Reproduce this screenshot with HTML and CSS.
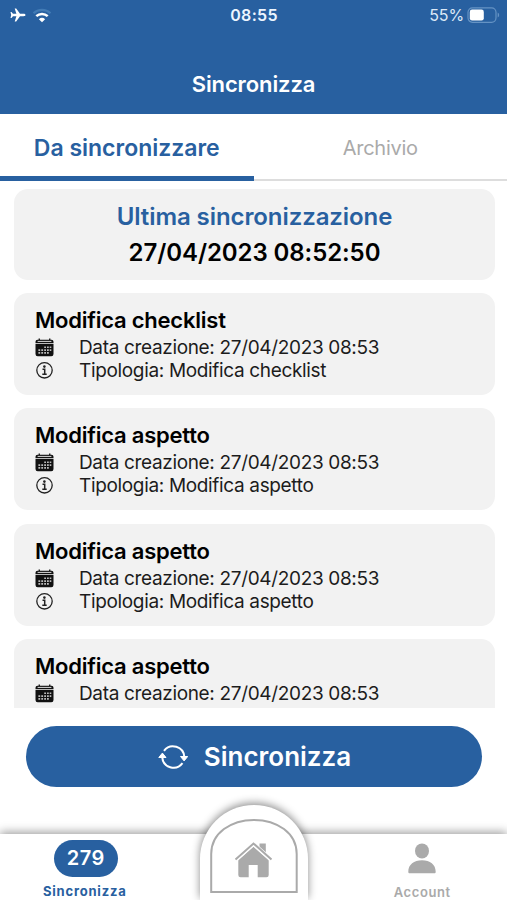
FILE: index.html
```html
<!DOCTYPE html>
<html lang="it">
<head>
<meta charset="utf-8">
<title>Sincronizza</title>
<link rel="stylesheet" href="styles.css">
</head>
<body>
<svg class="defs" aria-hidden="true">
  <symbol id="calendar" viewBox="0 0 19 19">
    <path fill="#111" d="M2.500 1.800H3.600V.6h1.300v1.200h9.200V.6h1.300v1.200h1.100A2 2 0 0 1 18.500 3.800v1.400H.5V3.800a2 2 0 0 1 2-2zM.5 6h18v10a2.200 2.200 0 0 1-2.200 2.200H2.700A2.200 2.200 0 0 1 .5 16z"/>
    <path stroke="#ddd" stroke-width="1" fill="none" d="M2.600 3.400h13.800"/>
    <path fill="#bbb" d="M9.200 8.500h1.800v1.600H9.200zM12 8.500h1.800v1.600H12zM14.700 8.500h1.600v1.600h-1.600zM3.400 11.300h1.800v1.600H3.400zM6.300 11.300h1.800v1.600H6.300zM9.200 11.300h1.800v1.600H9.200zM12 11.300h1.800v1.600H12zM14.700 11.300h1.600v1.600h-1.600zM3.400 14.100h1.800v1.600H3.400zM6.300 14.100h1.800v1.600H6.300zM9.200 14.100h1.800v1.600H9.200zM12 14.100h1.800v1.600H12z"/>
  </symbol>
  <symbol id="info" viewBox="0 0 19 19">
    <circle cx="9.500" cy="9.300" r="7.700" fill="none" stroke="#222" stroke-width="1.300"/>
    <circle cx="9.400" cy="5.600" r="1.300" fill="#222"/>
    <path d="M7.500 8.300h2.200v5M7.300 13.300h4.400" fill="none" stroke="#222" stroke-width="1.500"/>
  </symbol>
</svg>
<div class="screen">
  <header class="header">
    <div class="status">
      <div class="status-left">
        <svg width="16" height="14" viewBox="0 0 16 14"><path fill="#fff" d="M15.500 7c0-.8-.9-1.200-2-1.200H10L6.200.6H4.700l1.700 5.200H3L1.500 4H.5l.7 3-.7 3h1L3 8.200h3.400l-1.700 5.200h1.500L10 8.200h3.500c1.100 0 2-.4 2-1.200z"/></svg>
        <svg width="20" height="15" viewBox="0 0 20 15"><path d="M1.500 5.200a12.500 12.500 0 0 1 17 0" fill="none" stroke="#427bb5" stroke-width="2.200"/><path d="M4.300 8.200a8.300 8.300 0 0 1 11.400 0" fill="none" stroke="#fff" stroke-width="2.500"/><path d="M6.900 11.200a4.500 4.500 0 0 1 6.200 0L10 14.300z" fill="#fff"/></svg>
      </div>
      <div class="clock">08:55</div>
      <div class="status-right"><span class="percent">55%</span>
        <svg width="33" height="17" viewBox="0 0 33 17"><rect x="1" y=".8" width="28" height="14.500" rx="4.500" fill="none" stroke="#6593c4" stroke-width="1.200"/><rect x="2.800" y="2.600" width="14" height="11" rx="2.300" fill="#fff"/><path d="M30.700 5.500v5q1.500-.7 1.500-2.500t-1.500-2.500z" fill="#6593c4"/></svg>
      </div>
    </div>
    <h1 class="title">Sincronizza</h1>
  </header>
  <nav class="tabs">
    <div class="tab tab-active">Da sincronizzare</div>
    <div class="tab">Archivio</div>
  </nav>
  <main class="list">
    <section class="card summary">
      <div class="summary-label">Ultima sincronizzazione</div>
      <div class="summary-date">27/04/2023 08:52:50</div>
    </section>
    <article class="card item">
      <h2 class="item-title">Modifica checklist</h2>
      <div class="row"><svg class="icon"><use href="#calendar"/></svg><span>Data creazione: 27/04/2023 08:53</span></div>
      <div class="row"><svg class="icon"><use href="#info"/></svg><span>Tipologia: Modifica checklist</span></div>
    </article>
    <article class="card item">
      <h2 class="item-title">Modifica aspetto</h2>
      <div class="row"><svg class="icon"><use href="#calendar"/></svg><span>Data creazione: 27/04/2023 08:53</span></div>
      <div class="row"><svg class="icon"><use href="#info"/></svg><span>Tipologia: Modifica aspetto</span></div>
    </article>
    <article class="card item">
      <h2 class="item-title">Modifica aspetto</h2>
      <div class="row"><svg class="icon"><use href="#calendar"/></svg><span>Data creazione: 27/04/2023 08:53</span></div>
      <div class="row"><svg class="icon"><use href="#info"/></svg><span>Tipologia: Modifica aspetto</span></div>
    </article>
    <article class="card item">
      <h2 class="item-title">Modifica aspetto</h2>
      <div class="row"><svg class="icon"><use href="#calendar"/></svg><span>Data creazione: 27/04/2023 08:53</span></div>
      <div class="row"><svg class="icon"><use href="#info"/></svg></div>
    </article>
  </main>
  <div class="action">
    <button class="sync">
      <svg width="30" height="26" viewBox="0 0 30 26"><path d="M6 6.800A11.300 11.300 0 0 1 26.300 13M24.500 19.200A11.300 11.300 0 0 1 4.200 13" fill="none" stroke="#fff" stroke-width="2"/><path d="M22.500 12.500h7.200l-3.600 4.400zM.8 13.500H8L4.400 9.100z" fill="#fff" stroke="#fff" stroke-linejoin="round"/></svg>
      <span>Sincronizza</span>
    </button>
  </div>
  <footer class="bar">
    <div class="bar-item bar-sync">
      <div class="badge">279</div>
      <div class="bar-label">Sincronizza</div>
    </div>
    <div class="home">
      <svg width="108" height="95" viewBox="0 0 108 95"><path d="M11.200 87V49C11.200 28 31 14.900 54 14.900S96.700 28 96.700 49v38z" fill="none" stroke="#aaa" stroke-width="2"/><path d="M38.300 55 53.500 41.500 68.700 55v15a2.300 2.300 0 0 1-2.300 2.300h-8.700V60h-9v12.300h-8.100a2.300 2.300 0 0 1-2.300-2.300z" fill="#aaa"/><path d="M59.500 38.500h6.300v12l-6.300-6z" fill="#aaa"/><path d="m35.500 55 18-16 18 16" fill="none" stroke="#fff" stroke-width="4.200"/><path d="m35.500 54.500 18-16 18 16" fill="none" stroke="#aaa" stroke-width="2"/></svg>
    </div>
    <div class="bar-item bar-account">
      <svg width="28" height="31" viewBox="0 0 28 31"><ellipse cx="14" cy="7.900" rx="7" ry="7.500" fill="#aaa"/><path d="M.3 28.800C.3 21.500 6 17.300 14 17.300s13.700 4.200 13.700 11.500c0 1-.5 1.500-1.500 1.500H1.800c-1 0-1.500-.5-1.500-1.500z" fill="#aaa"/></svg>
      <div class="bar-label">Account</div>
    </div>
  </footer>
</div>
</body>
</html>
```
FILE: styles.css
```css
* { box-sizing: border-box; }
body { margin: 0; background: #fff; font-family: Inter, "Liberation Sans", sans-serif; color: #1c1c1c; }
h1, h2 { margin: 0; }
svg { display: block; flex: none; }
.defs { display: none; }
.screen { width: 507px; height: 900px; display: flex; flex-direction: column; overflow: hidden; white-space: nowrap; }
.header { height: 114px; background: #2860a0; color: #fff; flex: none; }
.status { height: 30px; display: grid; grid-template-columns: 1fr auto 1fr; align-items: center; padding: 0 7px 0 10px; }
.status-left { display: flex; align-items: center; gap: 6px; }
.clock { font-size: 16px; font-weight: 600; letter-spacing: 0.3px; color: #edf5ff; margin-right: 2px; }
.status-right { display: flex; align-items: center; justify-content: flex-end; gap: 3px; }
.percent { font-size: 16px; letter-spacing: -0.1px; color: #dce9f7; }
.title { height: 84px; padding-top: 25px; line-height: 59px; text-align: center; font-size: 22px; font-weight: 600; letter-spacing: -0.1px; }
.tabs { height: 67px; display: flex; flex: none; }
.tab { flex: 1; text-align: center; line-height: 68px; font-size: 20px; letter-spacing: -0.25px; color: #aaa; border-bottom: 2px solid #ddd; }
.tab-active { font-size: 23px; font-weight: 600; letter-spacing: 0; color: #2860a0; border-bottom: 5px solid #2860a0; }
.list { height: 527px; padding: 8px 12px 0 14px; display: flex; flex-direction: column; gap: 13.200px; overflow: hidden; flex: none; }
.card { background: #f2f2f2; border-radius: 14px; flex: none; }
.summary { height: 91px; padding-top: 10px; text-align: center; font-size: 24px; font-weight: 600; line-height: 36px; letter-spacing: -0.080px; }
.summary-label { color: #2860a0; }
.summary-date { color: #000; }
.item { height: 102px; padding: 15px 21px 0; }
.item-title { font-size: 22px; font-weight: 600; line-height: 24px; letter-spacing: -0.230px; color: #000; margin-bottom: 4px; }
.row { display: flex; align-items: center; height: 23px; gap: 25px; font-size: 19px; letter-spacing: -0.340px; }
.icon { width: 19px; height: 19px; }
.action { height: 126px; padding: 18px 25px 0 26px; flex: none; }
.sync { width: 100%; height: 61px; border: 0; border-radius: 31px; background: #2860a0; color: #fff; display: flex; align-items: center; justify-content: center; gap: 16px; font: 600 26px Inter, "Liberation Sans", sans-serif; padding: 0 0 0 1px; }
.bar { height: 66px; display: grid; grid-template-columns: 1fr 108px 1fr; background: #fff; box-shadow: 0 -2px 9px rgba(0,0,0,.38); flex: none; }
.bar-item { display: flex; flex-direction: column; align-items: center; }
.bar-label { font-size: 13px; font-weight: 600; letter-spacing: .6px; line-height: 16px; color: #aaa; }
.bar-sync { padding: 6px 28px 0 0; }
.bar-sync .bar-label { color: #2860a0; margin-top: 6px; margin-right: 2px; font-weight: 700; letter-spacing: .8px; }
.badge { width: 64px; height: 37px; border-radius: 19px; background: #2860a0; color: #fff; font-size: 20px; font-weight: 600; line-height: 37px; letter-spacing: .4px; text-align: center; }
.home { height: 95px; margin-top: -29px; border-radius: 54px 54px 0 0; background: #fff; box-shadow: 0 -2px 9px rgba(0,0,0,.45); }
.bar-account { padding: 9px 0 0 30px; }
.bar-account .bar-label { margin-top: 10px; }
```
